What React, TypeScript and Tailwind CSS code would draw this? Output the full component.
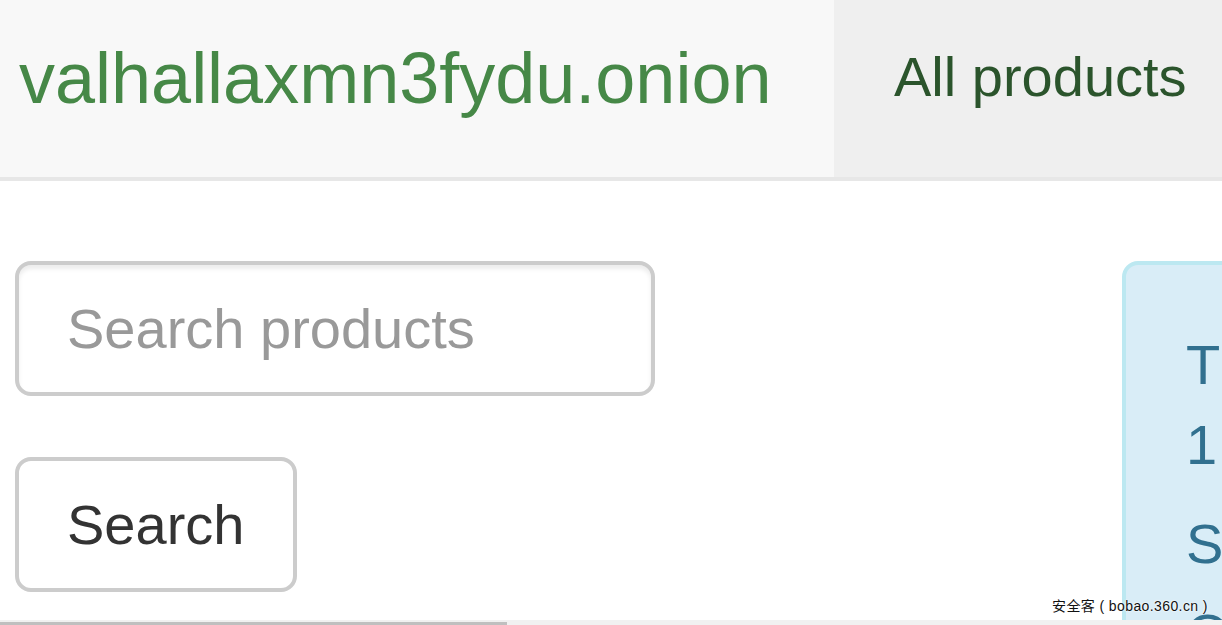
import React from "react";

export default function App() {
  return (
    <div className="relative w-[1222px] h-[625px] overflow-hidden bg-white font-['Liberation_Sans',Arial,sans-serif]">
      {/* Navbar */}
      <header className="flex h-[181px] bg-[#f8f8f8] border-b-4 border-[#e7e7e7]">
        <div className="w-[834px] shrink-0 pl-[19px] pt-[42px] text-[72px] leading-[72px] text-[#468847] whitespace-nowrap">
          valhallaxmn3fydu.onion
        </div>
        <nav className="flex-1 bg-[#efefef] pl-[60px] pt-[49px] text-[56px] leading-[56px] text-[#2b542c] whitespace-nowrap">
          All products
        </nav>
      </header>

      {/* Body */}
      <main className="flex pl-[15px] pt-[80px]">
        <div className="flex flex-col w-[640px] shrink-0">
          <input
            type="text"
            placeholder="Search products"
            className="w-[640px] h-[135px] border-4 border-[#cccccc] rounded-[16px] bg-white pl-[48px] pr-[48px] text-[56px] text-[#555] placeholder:text-[#999999] shadow-[inset_0_4px_4px_rgba(0,0,0,0.075)] outline-none font-['Liberation_Sans',Arial,sans-serif]"
          />
          <button
            type="button"
            className="mt-[61px] w-[282px] h-[135px] border-4 border-[#cccccc] rounded-[16px] bg-white text-[56px] text-[#333333] text-left pl-[48px] font-['Liberation_Sans',Arial,sans-serif]"
          >
            Search
          </button>
        </div>

        <div className="ml-[467px] w-[700px] h-[600px] shrink-0 bg-[#d9edf7] border-4 border-[#bce8f1] rounded-[16px] p-[60px] text-[56px] text-[#31708f] whitespace-nowrap">
          <p className="leading-[80px]">
            There are
            <br />
            1 product found
          </p>
          <p className="mt-[14px] leading-[90px]">
            Sorted by
            <br />
            Oldest first
          </p>
        </div>
      </main>

      {/* Watermark */}
      <div className="absolute left-[1052px] top-[598px] text-[14px] leading-[16px] tracking-[0.4px] text-[#111] whitespace-nowrap font-['Liberation_Sans','Noto_Sans_CJK_SC',sans-serif] [text-shadow:0_0_2px_#fff,0_0_2px_#fff]">
        安全客 ( bobao.360.cn )
      </div>

      {/* Horizontal scrollbar */}
      <div className="absolute left-0 bottom-0 w-full h-[5px] bg-[#f1f1f1]">
        <div className="mt-[2px] w-[507px] h-[3px] bg-[#bfbfbf]" />
      </div>
    </div>
  );
}
